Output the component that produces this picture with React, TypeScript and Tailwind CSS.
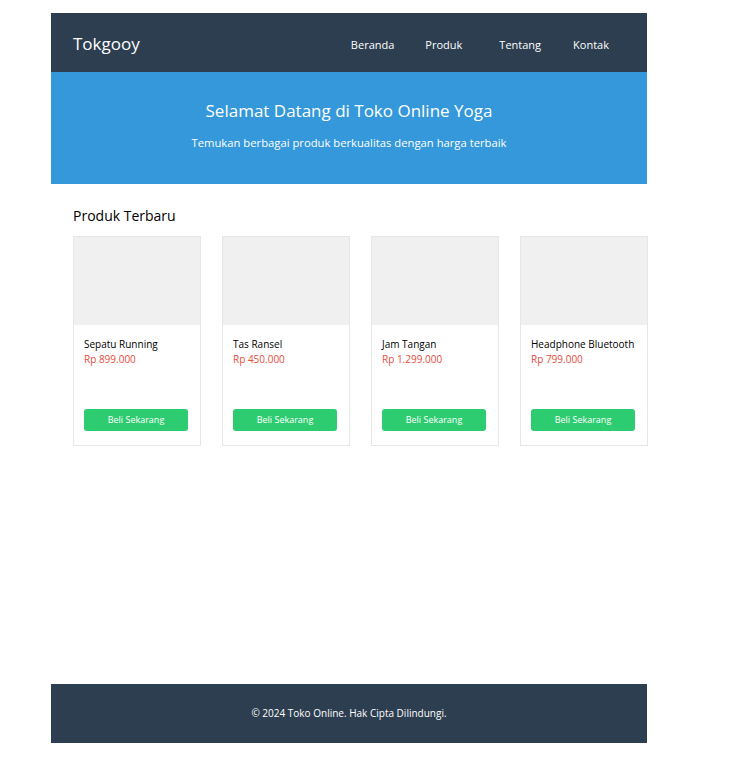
const products = [
  { name: 'Sepatu Running', price: 'Rp 899.000' },
  { name: 'Tas Ransel', price: 'Rp 450.000' },
  { name: 'Jam Tangan', price: 'Rp 1.299.000' },
  { name: 'Headphone Bluetooth', price: 'Rp 799.000' },
];

function ProductCard({ name, price }: { name: string; price: string }) {
  return (
    <div className="w-[128px] h-[210px] shrink-0 border border-[#e6e6e6] bg-white flex flex-col">
      <div className="h-[88px] bg-[#f0f0f0]" />
      <div className="flex flex-col flex-1 px-[10px] pt-[12px] pb-[14px]">
        <h3 className="text-[10px] leading-[14px] text-black">{name}</h3>
        <p className="text-[10px] leading-[14px] mt-[1px] text-[#e74c3c]">{price}</p>
        <button className="mt-auto h-[22px] w-[104px] rounded-[3px] bg-[#2ecc71] text-white text-[9px]">
          Beli Sekarang
        </button>
      </div>
    </div>
  );
}

export default function App() {
  return (
    <div className="min-h-[770px] bg-white" style={{ fontFamily: '"Open Sans", sans-serif' }}>
      <div className="ml-[51px] pt-[13px] w-[596px]">
        {/* Header */}
        <header className="h-[59px] bg-[#2c3e50] flex items-center justify-between pl-[22px] pr-[38px] pt-[3px]">
          <div className="text-white text-[17px] leading-[24px]">Tokgooy</div>
          <nav className="flex text-white text-[11px] pt-[3px]">
            <a className="mr-[31px]">Beranda</a>
            <a className="mr-[37px]">Produk</a>
            <a className="mr-[32px]">Tentang</a>
            <a>Kontak</a>
          </nav>
        </header>

        {/* Hero */}
        <section className="h-[112px] bg-[#3498db] text-white text-center pt-[27px]">
          <h1 className="text-[17px] leading-[24px]">Selamat Datang di Toko Online Yoga</h1>
          <p className="text-[11.25px] mt-[12px]">Temukan berbagai produk berkualitas dengan harga terbaik</p>
        </section>

        {/* Produk */}
        <main className="h-[500px] pl-[22px] pt-[22px]">
          <h2 className="text-[14px] leading-[20px] text-black mb-[10px]">Produk Terbaru</h2>
          <div className="flex gap-[21px]">
            {products.map((p) => (
              <ProductCard key={p.name} {...p} />
            ))}
          </div>
        </main>

        {/* Footer */}
        <footer className="h-[59px] bg-[#2c3e50] flex items-center justify-center text-white text-[10px]">
          © 2024 Toko Online. Hak Cipta Dilindungi.
        </footer>
      </div>
    </div>
  );
}
